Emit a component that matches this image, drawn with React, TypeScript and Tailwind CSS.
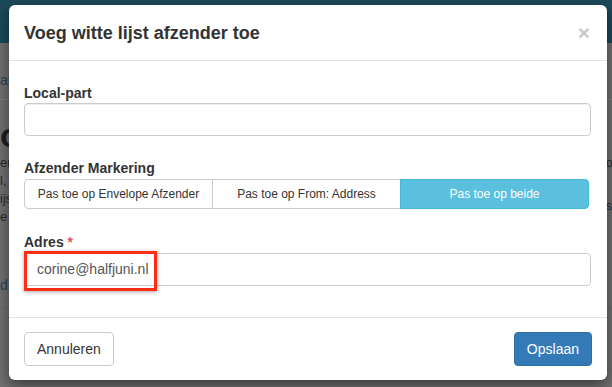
import React from "react";

const App: React.FC = () => {
  return (
    <div className="relative h-[387px] w-[612px] overflow-hidden bg-[#717171] font-['Liberation_Sans',Arial,sans-serif]">
      {/* page behind the backdrop */}
      <div className="h-[43px] bg-[#1c4a5b]" />
      <div className="h-[57px] whitespace-nowrap border-b border-[#7f7f7f] pt-[27px] text-[14px] leading-[20px] text-[#27465f]">
        af
      </div>
      <div className="flex justify-between">
        <div className="whitespace-nowrap">
          <div className="mt-[17px] text-[34px] font-bold leading-[37px] text-[#1f1f1f]">
            o
          </div>
          <div className="text-[13px] leading-[18px] text-[#2a2a2a]">
            <div>er</div>
            <div>l,</div>
            <div>ijs</div>
            <div>e l</div>
          </div>
          <div className="mt-[49px] text-[14px] leading-[20px] text-[#27465f]">
            d
          </div>
        </div>
        <div className="w-[6px] whitespace-nowrap pt-[54px] text-[12px] leading-[18px] text-[#2a2a2a]">
          <div>o</div>
          <div className="mt-[25px]">s</div>
        </div>
      </div>
      <div className="mt-[12px] border-b border-[#6a6a6a]" />

      {/* modal */}
      <div className="absolute left-[9px] top-[5px] w-[598px] rounded-[6px] bg-white shadow-[0_5px_15px_rgba(0,0,0,0.5)]">
        <div className="flex h-[56px] items-center justify-between border-b border-[#e5e5e5] px-[15px]">
          <h4 className="text-[18px] font-bold leading-[26px] text-[#333]">
            Voeg witte lijst afzender toe
          </h4>
          <button className="mr-[2px] text-[21px] font-bold leading-none text-[#c8c8c8]">
            ×
          </button>
        </div>

        <div className="relative h-[257px] border-b border-[#e5e5e5] px-[15px] pt-[22px] text-[#333]">
          <label className="block text-[14px] font-bold leading-[20px]">
            Local-part
          </label>
          <div className="h-[33px] w-[567px] rounded-[4px] border border-[#ccc] shadow-[inset_0_1px_1px_rgba(0,0,0,0.075)]" />

          <label className="mt-[22px] block text-[14px] font-bold leading-[20px]">
            Afzender Markering
          </label>
          <div className="mt-[1px] flex h-[30px] w-[565px] text-[12px]">
            <button className="flex-1 rounded-l-[4px] border border-[#ccc] bg-white text-[#333]">
              Pas toe op Envelope Afzender
            </button>
            <button className="-ml-px flex-1 border border-[#ccc] bg-white text-[#333]">
              Pas toe op From: Address
            </button>
            <button className="-ml-px flex-1 rounded-r-[4px] border border-[#46b8da] bg-[#5bc0de] text-white">
              Pas toe op beide
            </button>
          </div>

          <label className="mt-[23px] block text-[14px] font-bold leading-[20px]">
            Adres <span className="text-[#d9534f]">*</span>
          </label>
          <div className="mt-[1px] flex h-[33px] w-[567px] items-center rounded-[4px] border border-[#ccc] px-[12px] text-[14px] text-[#555]">
            corine@halfjuni.nl
          </div>

          {/* annotation */}
          <div className="absolute left-[15px] top-[190px] h-[40px] w-[133px] border-[3px] border-[#ff2d14] shadow-[0_1px_4px_rgba(0,0,0,0.35)]" />
        </div>

        <div className="flex items-center justify-between px-[15px] pb-[14px] pt-[14px] text-[14px]">
          <button className="h-[34px] rounded-[4px] border border-[#ccc] bg-white px-[12px] text-[#333]">
            Annuleren
          </button>
          <button className="h-[34px] rounded-[4px] border border-[#2e6da4] bg-[#337ab7] px-[12px] text-white">
            Opslaan
          </button>
        </div>
      </div>
    </div>
  );
};

export default App;
